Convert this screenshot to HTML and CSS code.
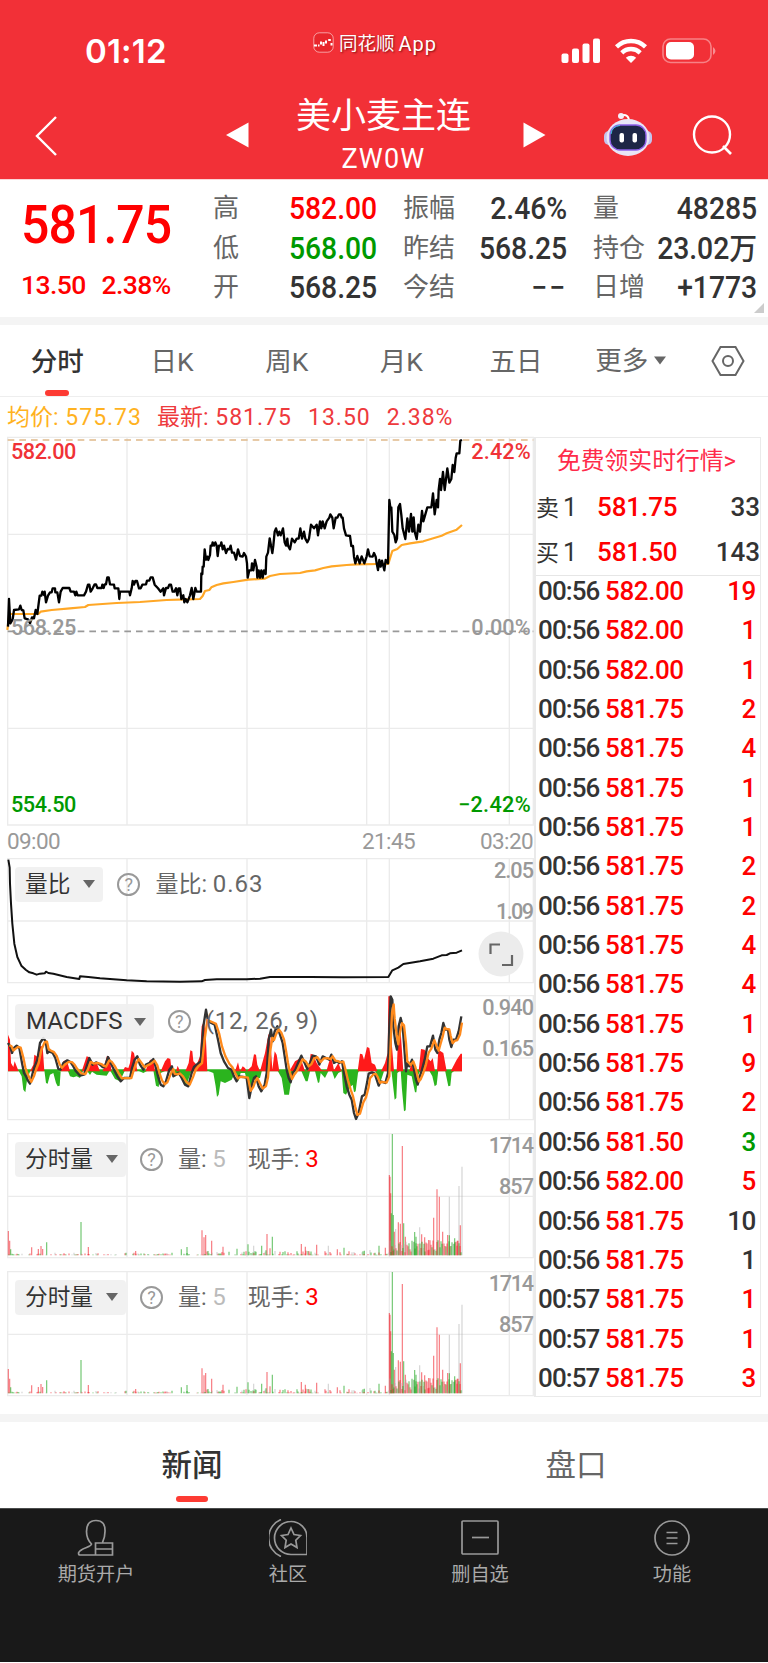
FILE: index.html
```html
<!DOCTYPE html>
<html lang="zh-CN">
<head>
    <meta charset="UTF-8">
    <meta name="viewport" content="width=device-width, initial-scale=1.0">
    <title>美小麦主连 ZW0W</title>
    <link rel="stylesheet" href="styles.css">
</head>
<body>

<header class="top">
    <div class="status">
        <span class="clock">01:12</span>
        <span class="brand">
            <svg width="21" height="21" viewBox="0 0 21 21"><rect x=".8" y=".8" width="19.4" height="19.4" rx="5.5" fill="#e8262c" stroke="#fff" stroke-opacity=".55"/><path d="M1 13.500h3M5 13.500h1.500M8 9.500v3M10.500 10v4M13 8.500v3M15.200 8h2.600M18.500 11v2.500" stroke="#fff" stroke-width="2" fill="none"/></svg>
            同花顺<i>App</i>
        </span>
        <svg class="signals" width="156" height="26" viewBox="0 0 156 26">
            <g fill="#fff">
                <rect x=".5" y="15.500" width="7" height="9.500" rx="2"/>
                <rect x="11" y="10.500" width="7" height="14.500" rx="2"/>
                <rect x="21.500" y="5.500" width="7" height="19.500" rx="2"/>
                <rect x="32" y="0.500" width="7" height="24.500" rx="2"/>
                <path d="M70 25l-5.200-5.300a7.600 7.600 0 0 1 10.400 0z"/>
            </g>
            <path d="M55.500 8.800a21 21 0 0 1 29 0M60.800 14.800a13.200 13.200 0 0 1 18.400 0" fill="none" stroke="#fff" stroke-width="4.400"/>
            <rect x="102" y="1" width="48" height="23.500" rx="7.500" fill="none" stroke="#fff" stroke-opacity=".4" stroke-width="1.600"/>
            <rect x="105" y="4" width="28" height="17.500" rx="5" fill="#fff"/>
            <path d="M152 9v8q5-4 0-8z" fill="#fff" fill-opacity=".45"/>
        </svg>
    </div>
    <div class="nav">
        <svg class="back" width="24" height="42" viewBox="0 0 24 42"><path d="M21 2L2 21l19 19" fill="none" stroke="#fff" stroke-width="2.400"/></svg>
        <svg class="prev" width="23" height="26" viewBox="0 0 23 26"><path d="M0 13L22.500 .5v25z" fill="#fff"/></svg>
        <h1>美小麦主连<small>ZW0W</small></h1>
        <svg class="next" width="23" height="26" viewBox="0 0 23 26"><path d="M22.500 13L.5 .5v25z" fill="#fff"/></svg>
        <svg class="robot" width="48" height="45" viewBox="0 0 48 45">
            <path d="M17 3.500q8-2 8 6" fill="none" stroke="#fff" stroke-width="2"/>
            <circle cx="17" cy="4" r="3" fill="#f4f0fa"/>
            <rect x="0" y="19" width="48" height="14" rx="5" fill="#c3c4ee"/>
            <ellipse cx="24" cy="25.500" rx="21.500" ry="18.500" fill="#e9e5f6"/>
            <rect x="6" y="13" width="36" height="25" rx="10" fill="#1d2646" stroke="#8d5fe8" stroke-width="1.400"/>
            <path d="M7 22q1-8 9-8.500" fill="none" stroke="#40c8e0"/>
            <rect x="15.500" y="21" width="4.500" height="9.500" rx="2" fill="#fff"/>
            <rect x="28.500" y="21" width="4.500" height="9.500" rx="2" fill="#fff"/>
        </svg>
        <svg class="search" width="42" height="42" viewBox="0 0 42 42"><circle cx="20" cy="19.500" r="18" fill="none" stroke="#fff" stroke-width="2.400"/><path d="M31 31l8 8" stroke="#fff" stroke-width="2.600"/></svg>
    </div>
</header>

<section class="quote">
    <div class="last up">
        <b>581.75</b>
        <p><span>13.50</span><span>2.38%</span></p>
    </div>
    <dl class="stats c1">
        <dt>高</dt><dd class="up">582.00</dd>
        <dt>低</dt><dd class="down">568.00</dd>
        <dt>开</dt><dd>568.25</dd>
    </dl>
    <dl class="stats c2">
        <dt>振幅</dt><dd>2.46%</dd>
        <dt>昨结</dt><dd>568.25</dd>
        <dt>今结</dt><dd class="none">−−</dd>
    </dl>
    <dl class="stats c3">
        <dt>量</dt><dd>48285</dd>
        <dt>持仓</dt><dd>23.02<i>万</i></dd>
        <dt>日增</dt><dd>+1773</dd>
    </dl>
    <span class="corner"></span>
</section>

<nav class="periods">
    <a class="active">分时</a>
    <a>日K</a>
    <a>周K</a>
    <a>月K</a>
    <a>五日</a>
    <a class="more">更多<svg width="12" height="9" viewBox="0 0 12 9"><path d="M0 .5h12L6 8.500z" fill="#666"/></svg></a>
    <svg class="gear" width="34" height="32" viewBox="0 0 34 32"><path d="M9.500 2h15L32.500 16l-8 14h-15L1.500 16z" fill="none" stroke="#666" stroke-width="2"/><circle cx="17" cy="16" r="5" fill="none" stroke="#666" stroke-width="2"/></svg>
</nav>

<p class="legend"><span class="avg">均价: <i>575.73</i></span><span>最新: <i>581.75</i></span><i>13.50</i><i>2.38%</i></p>

<main class="board">
    <div class="charts">
        <svg class="price" viewBox="0 0 1608 1188">
            <path class="grid" d="M23 22H1600V1185H23zM23 313H1600M23 895H1600M381 22V1185M741 22V1185M1100 22V1185M1168 22V1185M1528 22V1185"/>
            <path d="M23 30H1600" stroke="#e0b98a" stroke-width="4" stroke-dasharray="20 15"/>
            <path d="M23 604H1600" stroke="#999" stroke-width="5" stroke-dasharray="20 15"/>
            <polyline class="line" stroke="#ffa726" stroke-width="6.500" points="22,600 28,552 115,552 122,545 155,540 210,535 255,531 265,525 350,519 420,516 500,510 560,508 600,507 608,498 615,483 628,480 634,472 650,465 670,460 700,456 745,449 795,446 810,438 840,432 900,429 920,424 945,421 970,414 995,409 1040,405 1070,403 1135,402 1165,402 1170,385 1177,363 1192,357 1205,345 1230,340 1270,334 1300,325 1325,317 1340,310 1370,299 1386,285"/>
            <polyline class="line" stroke="#000" stroke-width="7" points="24,590 27,507 31,580 38,568 42,540 57,538 61,527 65,540 70,541 74,565 84,568 90,580 96,562 102,565 107,540 112,552 119,497 124,497 127,485 132,495 134,485 138,517 144,497 150,487 155,487 158,475 165,475 166,487 172,487 177,517 182,485 188,474 208,474 212,485 222,485 226,496 229,485 233,496 252,496 258,485 264,464 268,464 272,485 278,475 284,463 288,463 292,474 305,474 307,464 311,474 314,463 318,463 322,442 326,442 330,463 342,464 344,475 355,475 358,507 360,485 388,485 390,496 395,475 398,453 402,464 406,453 411,453 417,475 422,475 427,464 438,463 441,452 448,452 452,442 458,442 464,464 474,475 482,485 490,475 492,496 498,474 504,474 508,464 513,464 518,485 523,485 528,475 532,496 536,475 540,475 544,507 550,496 553,517 557,507 562,517 570,496 575,474 580,507 586,474 590,485 603,485 604,430 607,432 608,410 611,410 614,358 618,389 622,380 625,390 630,375 632,347 636,347 638,337 642,347 646,337 650,347 653,378 657,347 662,347 664,337 668,358 672,347 678,369 683,357 688,358 692,347 696,368 702,368 708,389 714,358 720,378 728,380 732,369 738,380 741,400 743,443 748,421 754,421 756,400 760,421 765,390 770,411 772,443 776,421 780,443 784,421 788,443 792,421 797,432 799,380 804,368 809,325 813,347 817,369 820,347 824,305 828,295 834,316 838,305 842,316 846,305 849,295 854,337 858,347 862,326 864,347 870,358 876,326 884,337 890,326 896,326 901,295 906,326 912,305 916,326 922,337 927,326 933,284 942,295 950,284 954,316 960,274 964,295 968,274 974,295 980,274 988,263 991,253 997,263 1001,295 1007,263 1012,263 1017,253 1022,253 1025,263 1028,263 1032,295 1038,316 1050,318 1054,348 1059,348 1062,380 1066,400 1072,378 1079,400 1085,379 1093,400 1100,379 1104,358 1109,379 1118,380 1122,369 1127,380 1130,400 1134,420 1138,390 1142,410 1146,392 1153,421 1157,390 1164,400 1168,210 1171,232 1174,232 1177,305 1183,315 1187,337 1191,326 1195,232 1200,222 1204,255 1208,295 1216,327 1222,265 1227,305 1233,252 1237,305 1241,262 1244,305 1250,327 1255,284 1260,305 1266,243 1270,274 1276,253 1282,232 1294,232 1299,190 1304,253 1310,210 1314,232 1316,180 1320,147 1323,180 1329,126 1334,180 1342,115 1348,158 1354,147 1358,105 1363,126 1367,84 1370,70 1378,70 1381,32 1386,30"/>
            <g class="scale">
                <text x="33" y="88" textLength="196" class="up2">582.00</text>
                <text x="33" y="616" textLength="196">568.25</text>
                <text x="33" y="1146" textLength="196" class="down">554.50</text>
                <text x="1414" y="88" textLength="178" class="up2">2.42%</text>
                <text x="1414" y="616" textLength="178">0.00%</text>
                <text x="1374" y="1146" textLength="218" class="down">−2.42%</text>
            </g>
        </svg>
        <div class="times"><span>09:00</span><span class="mid">21:45</span><span>03:20</span></div>

        <div class="panel">
            <svg viewBox="0 0 1608 378">
                <path class="grid" d="M23 2H1600V374H23zM23 189H1600M381 2V374M741 2V374M1100 2V374M1168 2V374M1528 2V374"/>
                <polyline class="line" stroke="#111" stroke-width="6" points="25,5 29,29 30,77 33,137 37,197 43,257 52,297 64,323 78,336 88,343 100,346 110,350 120,347 134,346 138,341 145,345 160,347 200,357 238,363 240,355 265,357 300,361 380,367 440,370 540,371 605,370 615,366 650,364 740,364 780,362 810,357 930,357 1030,358 1165,357 1177,337 1195,329 1210,318 1260,310 1300,302 1325,292 1340,291 1350,286 1370,284 1386,277"/>
                <g class="scale"><text x="1482" y="60" textLength="120">2.05</text><text x="1488" y="184" textLength="114">1.09</text></g>
            </svg>
            <div class="bar"><span class="pill">量比<em></em></span><span class="help">?</span><span>量比: <i>0.63</i></span></div>
            <svg class="expand" width="46" height="46" viewBox="0 0 46 46"><circle cx="23" cy="23" r="22.500" fill="#ececec"/><path d="M12.500 23v-9.500H22M34 24v10h-10" fill="none" stroke="#666" stroke-width="2.200"/></svg>
        </div>

        <div class="panel">
            <svg id="macd" viewBox="0 646 1608 378">
                <path class="grid" d="M23 648H1600V1020H23zM23 835H1600M381 648V1020M741 648V1020M1100 648V1020M1168 648V1020M1528 648V1020"/>
                <path fill="#2bb41e" d="M24 869H1386V875H24z"/>
                <path fill="#2bb41e" d="M55 872L65 890 70 930 76 938 82 895 92 872zM133 872L138 910 143 912 150 885 160 880 168 910 173 920 179 918 182 875zM203 872L210 890 220 893 230 890 240 895 250 872zM260 872L270 886 276 876 290 885 320 888 330 872 345 898 360 905 375 872zM412 872L430 880 445 872 460 872 468 918 476 922 482 880 500 872zM512 872L525 890 540 880 553 915 559 915 565 900 575 872zM620 872L640 880 647 920 651 952 656 945 662 905 675 910 695 900 705 880 715 905 722 880 735 880 746 930 751 925 760 900 780 895 786 872zM832 872L845 895 853 945 867 945 873 905 880 880 888 872zM903 872L917 905 923 905 930 875 945 875 954 910 958 908 962 880 975 895 985 875 995 872 1004 898 1015 880 1025 875 1030 940 1038 945 1048 925 1058 915 1062 938 1067 935 1074 880 1078 872zM1125 872L1135 900 1142 905 1152 875zM1174 872L1180 925 1184 960 1189 955 1192 880 1202 872 1206 930 1212 995 1217 992 1222 885 1235 890 1245 938 1249 938 1255 885 1262 872zM1287 872L1297 890 1304 920 1310 915 1315 872 1335 872 1345 920 1351 918 1355 880 1365 872z"/>
                <path fill="#ff1a1a" d="M24 875V765L30 780 33 850 40 862 44 845 52 865 56 875zM90 875L100 855 103 825 110 830 115 840 120 800 128 800 133 875zM182 875L190 845 200 840 210 875zM245 875L260 830 268 833 275 855 290 850 300 875zM308 875L321 828 328 832 335 875zM368 875L375 862 385 865 390 850 395 813 402 820 412 875zM436 875L450 840 460 840 465 875zM482 875L495 845 503 835 511 838 515 875zM528 875L533 858 540 875zM556 875L566 850 571 812 577 815 580 845 590 855 600 830 605 740 612 725 618 780 622 875zM705 875L714 848 720 875 728 860 735 865 740 875 755 860 762 824 768 825 772 855 780 875 795 820 805 765 810 760 817 870 824 815 830 825 838 875zM868 875L885 845 902 835 915 875 925 872 932 822 940 825 950 850 965 872 980 872 989 840 996 842 1002 872 1015 850 1025 875zM1073 875L1080 822 1087 824 1092 840 1101 802 1108 805 1115 850 1125 855 1132 875zM1143 875L1155 850 1163 820 1165 650H1172L1176 800 1182 875zM1190 875L1196 730 1201 740 1205 800 1210 875zM1228 875L1235 845 1240 875zM1256 875L1263 808 1274 810 1283 835 1292 845 1298 835 1305 875zM1311 875L1315 810 1330 820 1340 875zM1352 875L1370 840 1382 822H1386V875z"/>
                <g class="scale"><text x="1447" y="706" textLength="155">0.940</text><text x="1447" y="829" textLength="155">0.165</text></g>
            </svg>
            <div class="bar"><span class="pill wide">MACDFS<em></em></span><span class="help">?</span><span class="args">(12, 26, 9)</span></div>
        </div>

        <div class="panel">
            <svg class="volume" viewBox="0 39 1608 378"></svg>
            <div class="bar"><span class="pill">分时量<em></em></span><span class="help">?</span><span>量: <i class="dim">5</i></span><span class="hand">现手: <i class="up">3</i></span></div>
        </div>

        <div class="panel">
            <svg class="volume" viewBox="0 39 1608 378"></svg>
            <div class="bar"><span class="pill">分时量<em></em></span><span class="help">?</span><span>量: <i class="dim">5</i></span><span class="hand">现手: <i class="up">3</i></span></div>
        </div>
    </div>

    <aside class="book">
        <a class="promo">免费领实时行情&gt;</a>
        <div class="level"><span>卖<i>1</i></span><b>581.75</b><em>33</em></div>
        <div class="level"><span>买<i>1</i></span><b>581.50</b><em>143</em></div>
        <div class="ticks"></div>
    </aside>
</main>

<nav class="sections">
    <a class="active">新闻</a>
    <a>盘口</a>
</nav>

<footer class="toolbar">
    <a>
        <svg viewBox="0 0 38 38"><path d="M18.500 36H3q-1.500 0-1.500-2 .5-2.500 8-5.500 5-2 5-3.500-5-5-5-12.500Q9.500 1.500 19 1.500t9 11q0 6-2.500 11M18.500 24h17v12h-17zM18.500 30h17"/></svg>
        期货开户
    </a>
    <a>
        <svg viewBox="0 0 38 38"><path d="M12 .5a20 20 0 0 0 0 37M21.500 2.500h0.500a16 16 0 0 1 16 16v17H22a16.500 16.500 0 0 1 0-33zM22 9l3 6.500 6.500 1-4.700 4.700 1.200 7.300-6-3.500-6 3.500 1.200-7.300-4.700-4.700 6.500-1z"/></svg>
        社区
    </a>
    <a>
        <svg viewBox="0 0 38 38"><rect x="1" y="2" width="36" height="33" rx="1"/><path d="M11 18.500h17"/></svg>
        删自选
    </a>
    <a>
        <svg viewBox="0 0 38 38"><circle cx="19" cy="19" r="17"/><path d="M13.500 13.500h11M13.500 19h11M13.500 24.500h11"/></svg>
        功能
    </a>
</footer>

<script src="script.js"></script>
</body>
</html>
```
FILE: styles.css
```css
* { box-sizing: border-box; }
body { margin: 0; width: 768px; height: 1663px; background: #fff; color: #333; font-family: Roboto, "Noto Sans CJK SC", sans-serif; overflow: hidden; }
i, em { font-style: normal; }
svg { display: block; flex: none; }
.up { color: #f00; }
.down { color: #090; }

/* header */
.top { height: 179px; background: #f23037; color: #fff; }
.status { display: flex; height: 88px; }
.clock { width: 227px; padding-left: 85px; font: 600 33px/103px Inter, sans-serif; letter-spacing: 0.2px; }
.brand { display: flex; width: 249px; padding: 32px 0 0 86px; font-size: 18.500px; line-height: 25px; white-space: nowrap; text-shadow: 1px 1px 2px rgba(90, 0, 0, .7); }
.brand svg { margin-right: 5px; }
.brand i { font-size: 20px; letter-spacing: 1px; margin-left: 4px; }
.signals { margin: 38px 0 0 85px; }
.nav { display: flex; height: 91px; align-items: flex-start; }
.back { margin: 27px 0 0 35px; }
.prev { margin: 34px 0 0 167px; }
.nav h1 { width: 276px; margin: 8px 0 0; padding-right: 7px; text-align: center; font-size: 35px; font-weight: 400; line-height: 42px; }
.nav small { display: block; font-size: 27px; line-height: 42px; letter-spacing: 1.200px; }
.next { margin: 34px 0 0 -2px; }
.robot { margin: 24px 0 0 58px; }
.search { margin: 27px 0 0 40px; }

/* quote summary */
.quote { position: relative; display: flex; height: 146px; border-top: 1px solid #fbd5d6; border-bottom: 8px solid #f4f4f4; }
.last { width: 213px; padding: 13px 0 0 21px; }
.last b { display: block; width: max-content; font-size: 54px; font-weight: 500; line-height: 64px; letter-spacing: -1px; transform: scaleX(.925); transform-origin: 0 0; }
.last p { display: flex; gap: 16px; margin: 11px 0 0; font-size: 26.500px; font-weight: 500; line-height: 34px; letter-spacing: -.6px; }
.stats { display: grid; grid-template-columns: auto 1fr; align-content: start; grid-auto-rows: 39.700px; margin: 9px 0 0; line-height: 39px; }
.stats dt { font-size: 26px; color: #666; }
.stats dd { margin: 0; text-align: right; font-size: 30.500px; font-weight: 500; letter-spacing: -.1px; white-space: nowrap; transform: scaleX(.93); transform-origin: 100% 0; }
.stats dd i { font-size: 30px; }
.stats dd.none { letter-spacing: 2px; }
.c1 { width: 164px; }
.c2 { width: 164px; margin-left: 26px; }
.c3 { width: 164px; margin-left: 26px; }
.corner { position: absolute; right: 4px; bottom: 4px; border: 5px solid; border-color: transparent #ccc #ccc transparent; }

/* period tabs */
.periods { display: flex; height: 72px; align-items: center; border-bottom: 1px solid #eee; font-size: 26.500px; color: #666; }
.periods a { position: relative; width: 114.700px; line-height: 73px; height: 71px; text-align: center; }
.periods .active { font-weight: 500; color: #333; }
.periods .more { display: flex; align-items: center; justify-content: center; gap: 6px; }
.periods .gear { margin-left: 23px; }
.active::after { content: ""; position: absolute; left: 50%; bottom: 0; width: 24px; height: 6px; margin-left: -12px; border-radius: 3px; background: #fd3b33; }

.legend { display: flex; gap: 15px; height: 33px; margin: 0; padding-left: 7px; font-size: 23px; line-height: 42px; color: #ee3a3d; }
.legend i { letter-spacing: 1px; margin-left: 1px; }
.legend .avg { color: #ffb21f; }

/* charts */
.board { display: flex; height: 984px; }
.charts { width: 536px; }
.price { width: 536px; height: 396px; }
.grid { fill: none; stroke: #ebebeb; stroke-width: 4; }
.line { fill: none; stroke-linejoin: round; }
.scale { font-size: 65px; font-weight: 500; fill: #999; }
.scale .up2 { fill: #f03236; }
.scale .down { fill: #090; }
.times { display: flex; height: 31.600px; padding: 0 3px 0 7px; font-size: 22.500px; line-height: 31px; color: #999; letter-spacing: -.6px; }
.times .mid { margin: 0 auto 0 302px; }
.panel { position: relative; height: 126px; margin-bottom: 11.700px; }
.panel > svg { width: 536px; height: 126px; }
.panel > .expand { position: absolute; left: 478px; top: 73px; width: 46px; height: 46px; }
.bar { position: absolute; left: 15px; top: 9px; display: flex; align-items: center; height: 35px; font-size: 23px; line-height: 35px; color: #666; white-space: nowrap; }
.bar i { font-size: 24px; letter-spacing: 1px; }
.pill { display: flex; align-items: center; gap: 13px; padding: 0 8px 0 10px; border-radius: 4px; background: rgba(239, 239, 239, .9); color: #333; font-size: 22.700px; }
.pill.wide { font-size: 24px; letter-spacing: .2px; gap: 11px; padding-left: 11px; }
.pill em { border: 6px solid transparent; border-top: 8px solid #666; border-bottom: 0; }
.help { width: 23px; height: 23px; margin: 0 15px 0 14px; border: 2px solid #999; border-radius: 50%; color: #999; font-size: 18px; line-height: 20px; text-align: center; }
.args { font-size: 24px; letter-spacing: .7px; }
.hand { margin-left: 21px; }
.dim { color: #bbb; }

/* order book */
.book { width: 227px; height: 960px; margin-top: 7px; margin-left: -2px; border: 1px solid #eaeaea; border-width: 1px 1px 1px 2px; }
.promo { display: block; height: 47px; padding-right: 3px; text-align: center; font-size: 23.800px; line-height: 47px; color: #ff2b4a; }
.level { display: grid; grid-template-columns: 61px 1fr auto; height: 45px; font-size: 26px; line-height: 45px; }
.level span { font-size: 23px; }
.level span i { margin-left: 4px; font-size: 25px; }
.level b { font-weight: 500; color: #f00; letter-spacing: -.1px; }
.level em { font-weight: 500; }
.ticks { border-top: 1px solid #e6e6e6; }
.tick { display: grid; grid-template-columns: 67px 1fr auto; height: 39.350px; padding: 0 4px 0 2px; font-size: 26px; font-weight: 500; line-height: 30px; letter-spacing: -.4px; }
.tick time { letter-spacing: -.9px; }

/* bottom */
.sections { display: flex; height: 94px; border-top: 8px solid #f4f4f4; font-size: 30.500px; color: #666; }
.sections a { position: relative; flex: 1; text-align: center; line-height: 88px; }
.sections .active { font-weight: 500; color: #333; }
.sections .active::after { width: 32px; margin-left: -16px; bottom: 6px; }
.toolbar { display: flex; height: 154px; background: #191919; border-top: 1px solid #4a4d4c; }
.toolbar a { width: 25%; padding-top: 10px; text-align: center; font-size: 19.200px; line-height: 36px; color: #aaa; }
.toolbar svg { width: 38px; height: 38px; margin: 0 auto; fill: none; stroke: #999; stroke-width: 1.700; }
```
FILE: script.js
```js
const NS = 'http://www.w3.org/2000/svg';

function add(svg, name, attrs) {
    const el = document.createElementNS(NS, name);
    for (const k in attrs) el.setAttribute(k, attrs[k]);
    svg.appendChild(el);
    return el;
}

// trades: price, size, colour of the size
const trades = [
    ['582.00', 19, 'up'], ['582.00', 1, 'up'], ['582.00', 1, 'up'], ['581.75', 2, 'up'], ['581.75', 4, 'up'],
    ['581.75', 1, 'up'], ['581.75', 1, 'up'], ['581.75', 2, 'up'], ['581.75', 2, 'up'], ['581.75', 4, 'up'],
    ['581.75', 4, 'up'], ['581.75', 1, 'up'], ['581.75', 9, 'up'], ['581.75', 2, 'up'], ['581.50', 3, 'down'],
    ['582.00', 5, 'up'], ['581.75', 10, ''], ['581.75', 1, ''], ['581.75', 1, 'up'], ['581.75', 1, 'up'], ['581.75', 3, 'up']
];
document.querySelector('.ticks').innerHTML = trades.map(([price, size, dir], i) =>
    `<div class="tick"><time>${i < 18 ? '00:56' : '00:57'}</time><span class="up">${price}</span><span class="${dir}">${size}</span></div>`
).join('');

// MACD: fast line, and its smoothed signal
const dif = [24,790,30,800,36,820,42,805,50,798,58,805,66,850,72,880,78,890,85,905,90,912,98,880,104,860,112,840,120,790,130,775,137,785,142,820,148,815,158,820,166,835,175,868,182,870,190,850,202,842,212,848,220,860,228,875,240,888,252,885,260,860,268,835,278,855,288,848,300,855,308,862,314,862,324,832,332,850,342,870,352,890,362,905,372,895,390,895,396,865,404,840,412,830,420,855,430,870,438,855,448,850,460,838,468,865,474,890,482,915,490,920,498,905,508,870,516,860,520,890,528,885,536,880,545,895,555,915,565,920,575,880,582,862,590,855,602,845,610,740,618,690,624,725,634,730,644,735,654,780,662,820,672,845,684,865,694,870,702,890,710,905,716,890,730,892,740,895,748,955,756,915,762,895,768,890,776,920,784,935,794,915,800,880,806,780,813,750,818,785,824,755,832,740,840,765,848,790,854,830,860,870,866,895,872,908,878,880,886,870,894,850,904,828,914,850,922,868,930,850,938,828,948,830,958,855,968,830,978,835,988,840,994,825,1002,850,1010,845,1018,850,1026,845,1032,880,1040,920,1048,945,1055,960,1062,1000,1068,1018,1076,1000,1086,950,1094,945,1102,905,1106,882,1116,878,1124,882,1130,900,1136,918,1142,905,1156,910,1164,880,1168,740,1172,650,1177,660,1180,740,1186,790,1191,810,1196,740,1202,715,1208,740,1214,820,1218,875,1222,850,1228,860,1236,840,1242,870,1248,900,1253,915,1258,895,1266,870,1274,840,1282,800,1290,800,1299,768,1306,810,1312,820,1318,780,1324,760,1330,730,1336,750,1344,750,1348,780,1354,802,1360,780,1368,780,1376,755,1384,710];
const fast = [], signal = [];
let ema = 810;
for (let i = 0; i < dif.length; i += 2) {
    ema = ema * .35 + dif[i + 1] * .65;
    fast.push(dif[i] + ',' + dif[i + 1]);
    signal.push(Math.min(dif[i] + 4, 1386) + ',' + ema.toFixed(1));
}
const macd = document.getElementById('macd');
add(macd, 'polyline', { class: 'line', points: fast.join(' '), stroke: '#333', 'stroke-width': 7 });
add(macd, 'polyline', { class: 'line', points: signal.join(' '), stroke: '#ff8a1c', 'stroke-width': 7 });

// volume: x, top, colour; the rest of the session is low noise
const colors = { r: '#f01e28', g: '#10a010', n: '#aaa' };
const bars = [
    [25,333,'r'],[29,362,'r'],[32,388,'g'],[95,382,'r'],[115,387,'r'],[123,378,'r'],[128,387,'r'],[140,367,'g'],[243,306,'g'],[265,381,'r'],
    [407,393,'r'],[544,388,'g'],[561,381,'g'],[606,331,'r'],[612,352,'r'],[617,345,'r'],[635,362,'r'],[669,380,'r'],[711,386,'g'],[744,373,'g'],
    [761,377,'n'],[785,377,'g'],[801,342,'r'],[810,385,'r'],[817,350,'g'],[904,372,'r'],[916,380,'r'],[950,374,'r'],[985,377,'n'],[1012,388,'r'],
    [1032,383,'g'],[1093,392,'g'],[1137,377,'g'],[1156,383,'r'],
    [1168,165,'r'],[1170,170,'r'],[1172,220,'r'],[1174,280,'g'],[1177,42,'g'],[1180,285,'g'],[1183,335,'r'],[1187,327,'n'],[1195,307,'r'],
    [1201,311,'r'],[1207,78,'r'],[1211,310,'g'],[1216,350,'r'],[1244,336,'g'],[1248,350,'g'],[1259,322,'n'],[1265,343,'r'],[1274,352,'r'],
    [1286,360,'r'],[1301,293,'r'],[1311,208,'r'],[1318,230,'r'],[1328,335,'r'],[1343,345,'r'],[1348,230,'n'],[1348,346,'g'],[1364,355,'g'],
    [1372,362,'r'],[1377,198,'n'],[1381,316,'r'],[1386,140,'n']
];
let seed = 7;
function rnd() {
    seed = (seed * 16807) % 2147483647;
    return seed / 2147483647;
}
for (let x = 24; x < 1386; x += 3) {
    const late = x > 1168, mid = x > 600;
    if (!late && rnd() < (mid ? .4 : .6)) continue;
    const h = late ? 8 + rnd() * 38 : 2 + rnd() * rnd() * (mid ? 16 : 7);
    bars.push([x, 406 - h, 'rgrgn'[Math.floor(rnd() * 5)]]);
}
document.querySelectorAll('.volume').forEach(svg => {
    add(svg, 'path', { class: 'grid', d: 'M23 41H1600V413H23zM23 229H1600M381 41V413M741 41V413M1100 41V413M1168 41V413M1528 41V413' });
    for (const [x, top, c] of bars) {
        add(svg, 'path', { d: `M${x} 406V${top}`, stroke: colors[c], 'stroke-width': 3.5, 'stroke-opacity': c === 'n' ? .5 : .6 });
    }
    const g = add(svg, 'g', { class: 'scale' });
    add(g, 'text', { x: 1466, y: 99, textLength: 136 }).textContent = '1714';
    add(g, 'text', { x: 1497, y: 223, textLength: 105 }).textContent = '857';
});
```
